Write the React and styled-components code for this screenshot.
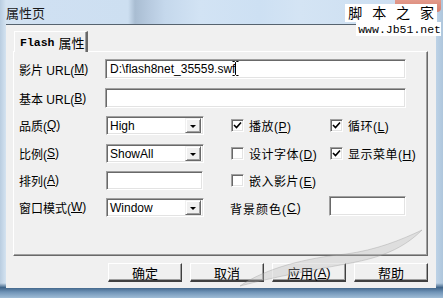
import React from 'react';
import styled, { createGlobalStyle } from 'styled-components';

const Global = createGlobalStyle`
html, body {
margin: 0;
padding: 0;
width: 443px;
height: 298px;
overflow: hidden;
}
body {
font-family: "Liberation Sans", "Noto Sans CJK SC", sans-serif;
font-size: 12px;
color: #000;
}
`;

const Window = styled.div`
position: relative;
width: 443px;
height: 298px;
box-sizing: border-box;
display: flex;
flex-direction: column;
padding: 0 7px 10px 6px;
background:
  linear-gradient(180deg, rgba(255,255,255,0) 0%, rgba(255,255,255,0) 95%, #3f6488 96.5%, #6f93b6 98%, #9fbcd6 100%),
  linear-gradient(90deg, #b9cde0 0px, #d4e3f1 6px, #cfe0f2 40px, #cddff1 128px, #a9bdd2 135px, #b8cbe0 150px, #c5d8ec 165px, #d2e3f4 200px, #cde0f3 260px, #d4e4f4 300px, #c9dcef 430px, #aec6dc 443px);
overflow: hidden;
`;

const TitleBar = styled.div`
height: 24px;
display: flex;
align-items: center;
font-size: 13px;
color: #1a1a1a;
flex-shrink: 0;
`;

const Client = styled.div`
flex: 1;
background: #f0f0f0;
border-top: 1px solid #56636f;
display: flex;
flex-direction: column;
padding: 6px 8px 0 7px;
`;

const TabStrip = styled.div`
display: flex;
height: 20px;
padding-left: 1px;
position: relative;
z-index: 1;
`;

const Tab = styled.div`
display: flex;
align-items: center;
gap: 4px;
padding: 0 0 0 5px;
width: 74px;
box-sizing: border-box;
white-space: nowrap;
background: #f0f0f0;
border-top: 1px solid #fff;
border-left: 1px solid #fff;
border-right: 2px solid #696969;
box-shadow: inset -1px 0 0 #a0a0a0;
margin-bottom: -1px;
font-size: 13px;
`;

const MonoText = styled.span`
font-family: "Liberation Mono", "DejaVu Sans Mono", monospace;
font-size: 11.5px;
font-weight: bold;
`;

const Panel = styled.div`
height: 205px;
box-sizing: border-box;
background: #f0f0f0;
border-top: 1px solid #fff;
border-left: 1px solid #fff;
border-right: 1px solid #696969;
border-bottom: 1px solid #696969;
box-shadow: inset -1px -1px 0 #a0a0a0;
padding: 7px 0 0 5px;
`;

const Form = styled.div`
display: grid;
grid-template-columns: 86px 100px 25px 99px 78px;
grid-template-rows: 29px 28px 28px 27px 27px 20px;
align-items: start;
`;

const Label = styled.div`
height: 18px;
display: flex;
align-items: center;
margin-top: ${p => p.$offset || 0}px;
white-space: nowrap;
letter-spacing: ${p => p.$spaced ? '1px' : '0'};
`;

const Key = styled.span`
text-decoration: underline;
`;

const TextBox = styled.div`
grid-column: ${p => p.$span || 'auto'};
height: ${p => p.$height || 20}px;
box-sizing: border-box;
width: ${p => p.$width}px;
margin-left: ${p => p.$left || 0}px;
margin-top: ${p => p.$top || 0}px;
background: #fff;
border-top: 1px solid #a0a0a0;
border-left: 1px solid #a0a0a0;
border-right: 1px solid #fff;
border-bottom: 1px solid #fff;
box-shadow: inset 1px 1px 0 #696969, inset -1px -1px 0 #e3e3e3;
display: flex;
align-items: center;
padding-left: 4px;
position: relative;
`;

const Select = styled.div`
width: 98px;
height: 19px;
margin-left: 1px;
box-sizing: border-box;
background: #fff;
border-top: 1px solid #a0a0a0;
border-left: 1px solid #a0a0a0;
border-right: 1px solid #fff;
border-bottom: 1px solid #fff;
box-shadow: inset 1px 1px 0 #696969, inset -1px -1px 0 #e3e3e3;
display: flex;
align-items: center;
padding: 2px 2px 2px 3px;
`;

const SelectValue = styled.span`
flex: 1;
`;

const ArrowButton = styled.div`
width: 16px;
height: 15px;
box-sizing: border-box;
background: #f0f0f0;
border-top: 1px solid #f0f0f0;
border-left: 1px solid #f0f0f0;
border-right: 1px solid #696969;
border-bottom: 1px solid #696969;
box-shadow: inset 1px 1px 0 #fff, inset -1px -1px 0 #a0a0a0;
display: flex;
align-items: center;
justify-content: center;
&::after {
  content: '';
  border-left: 3px solid transparent;
  border-right: 3px solid transparent;
  border-top: 3px solid #000;
  margin-top: 1px;
}
`;

const Check = styled.label`
display: flex;
align-items: center;
gap: 5px;
height: 18px;
white-space: nowrap;
margin-left: 1px;
letter-spacing: 0.5px;
`;

const Box = styled.span`
width: 13px;
height: 13px;
box-sizing: border-box;
background: #fff;
border-top: 1px solid #a0a0a0;
border-left: 1px solid #a0a0a0;
border-right: 1px solid #fff;
border-bottom: 1px solid #fff;
box-shadow: inset 1px 1px 0 #696969, inset -1px -1px 0 #e3e3e3;
display: flex;
align-items: center;
justify-content: center;
flex-shrink: 0;
`;

const Empty = styled.div``;

const ButtonRow = styled.div`
display: flex;
justify-content: flex-end;
gap: 8px;
margin-top: 7px;
`;

const Button = styled.div`
width: 74px;
height: 19px;
box-sizing: border-box;
background: #f0f0f0;
border-top: 1px solid #fff;
border-left: 1px solid #fff;
border-right: 1px solid #404040;
border-bottom: 2px solid #404040;
box-shadow: inset -1px -1px 0 #a0a0a0;
display: flex;
align-items: center;
justify-content: center;
font-size: 13px;
`;

const Watermark = styled.div`
position: absolute;
top: 4px;
right: 6px;
display: flex;
flex-direction: column;
align-items: flex-end;
z-index: 3;
`;

const CloseButton = styled.div`
position: absolute;
top: -6px;
right: 2px;
width: 46px;
height: 18px;
border-radius: 4px;
background: linear-gradient(180deg, #e9a79a, #d6806f);
z-index: 2;
`;

const WmTitle = styled.div`
background: #fff;
font-size: 14px;
letter-spacing: 3px;
padding: 1px 0 1px 3px;
line-height: 16px;
`;

const WmUrl = styled.div`
background: #fff;
font-family: "Liberation Mono", monospace;
font-size: 11.5px;
line-height: 12px;
padding: 2px 0 0 2px;
margin-right: -4px;
`;

const Swoosh = styled.svg`
position: absolute;
left: 236px;
top: 228px;
pointer-events: none;
z-index: 4;
`;

const CheckMark = () => (
  <svg width="9" height="9" viewBox="0 0 9 9">
    <path d="M1 4 L3.5 6.5 L8 1.5" stroke="#000" strokeWidth="1.6" fill="none" />
  </svg>
);

const Cursor = () => (
  <svg width="7" height="15" viewBox="0 0 7 15" style={{ position: 'absolute', left: 126, top: 1 }}>
    <path d="M0.5 0.5 H2.5 L3.5 1.5 L4.5 0.5 H6.5 M3.5 1.5 V13.5 M0.5 14.5 H2.5 L3.5 13.5 L4.5 14.5 H6.5" stroke="#000" strokeWidth="1" fill="none" />
  </svg>
);

const CheckItem = ({ checked, children }) => (
  <Check>
    <Box>{checked && <CheckMark />}</Box>
    <span>{children}</span>
  </Check>
);

const Dropdown = ({ value }) => (
  <Select>
    <SelectValue>{value}</SelectValue>
    <ArrowButton />
  </Select>
);

export default function App() {
  return (
    <>
      <Global />
      <Window>
        <TitleBar>属性页</TitleBar>
        <CloseButton />
        <Watermark>
          <WmTitle>脚 本 之 家</WmTitle>
          <WmUrl>www.Jb51.net</WmUrl>
        </Watermark>
        <Client>
          <TabStrip>
            <Tab><MonoText>Flash</MonoText><span>属性</span></Tab>
          </TabStrip>
          <Panel>
            <Form>
              <Label $offset={1}>影片 URL(<Key>M</Key>)</Label>
              <TextBox $span="2 / 6" $width={301}>
                D:\flash8net_35559.swf
                <Cursor />
              </TextBox>

              <Label $offset={1}>基本 URL(<Key>B</Key>)</Label>
              <TextBox $span="2 / 6" $width={301} />

              <Label>品质(<Key>Q</Key>)</Label>
              <Dropdown value="High" />
              <Empty />
              <CheckItem checked>播放(<Key>P</Key>)</CheckItem>
              <CheckItem checked>循环(<Key>L</Key>)</CheckItem>

              <Label>比例(<Key>S</Key>)</Label>
              <Dropdown value="ShowAll" />
              <Empty />
              <CheckItem>设计字体(<Key>D</Key>)</CheckItem>
              <CheckItem checked>显示菜单(<Key>H</Key>)</CheckItem>

              <Label>排列(<Key>A</Key>)</Label>
              <TextBox $width={97} $left={1} $height={19} />
              <Empty />
              <CheckItem>嵌入影片(<Key>E</Key>)</CheckItem>
              <Empty />

              <Label>窗口模式(<Key>W</Key>)</Label>
              <Dropdown value="Window" />
              <Empty />
              <Label $offset={1} $spaced>背景颜色(<Key>C</Key>)</Label>
              <TextBox $width={77} $top={-2} />
            </Form>
          </Panel>
          <ButtonRow>
            <Button>确定</Button>
            <Button>取消</Button>
            <Button>应用(<Key>A</Key>)</Button>
            <Button>帮助</Button>
          </ButtonRow>
        </Client>
        <Swoosh width="190" height="62" viewBox="0 0 190 62">
          <path d="M4 58 C30 40 70 30 110 26 C140 22 165 12 186 2 C170 18 150 28 120 34 C90 40 50 46 4 58 Z" fill="rgba(190,190,190,0.35)" stroke="rgba(150,150,150,0.35)" strokeWidth="1" />
        </Swoosh>
      </Window>
    </>
  );
}
